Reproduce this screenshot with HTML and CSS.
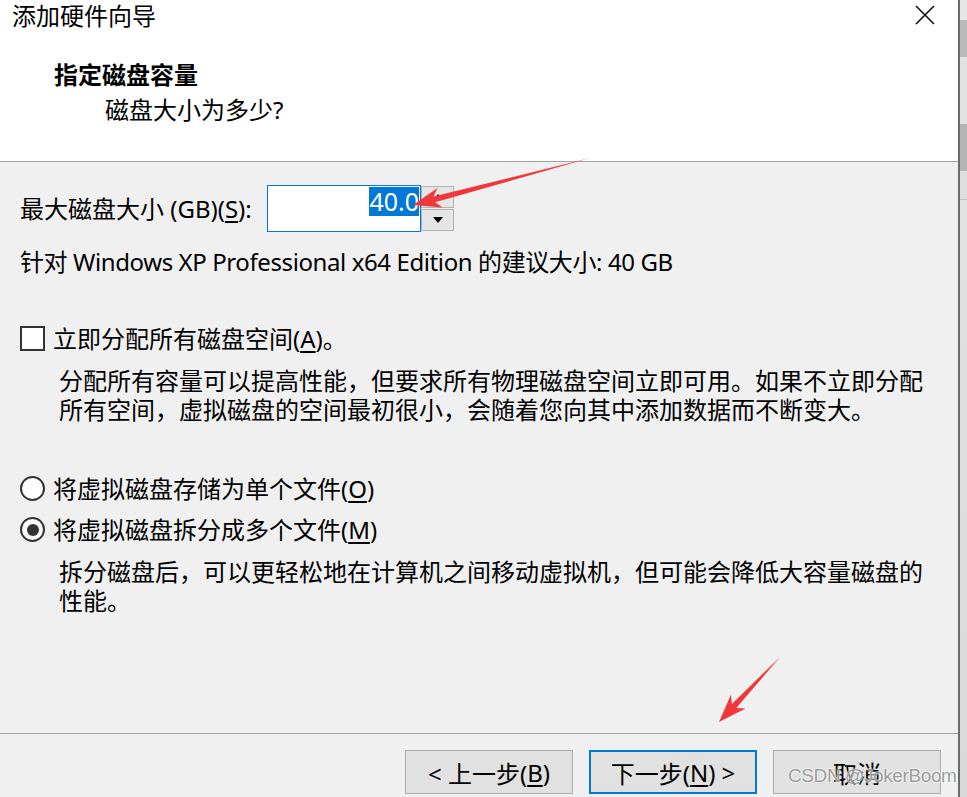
FILE: index.html
```html
<!DOCTYPE html>
<html lang="zh-CN">
<head>
<meta charset="UTF-8" />
<title>添加硬件向导</title>
<link rel="stylesheet" href="styles.css">
</head>
<body>

<div class="screen">
  <div class="dialog">
    <div class="header">
      <div class="titlebar">
        <span class="title">添加硬件向导</span>
        <svg class="close" width="20" height="20" viewBox="0 0 20 20">
          <path d="M1 1L19 19M19 1L1 19" stroke="#111" stroke-width="1.6" fill="none" />
        </svg>
      </div>
      <div class="heading">指定磁盘容量</div>
      <div class="subheading">磁盘大小为多少?</div>
    </div>

    <div class="content">
      <div class="size-row">
        <span class="size-label">最大磁盘大小 (GB)(<u>S</u>):</span>
        <div class="spin">
          <div class="spin-input"><span class="sel">40.0</span></div>
          <div class="spin-buttons">
            <div class="spin-btn"><span class="tri up"></span></div>
            <div class="spin-btn"><span class="tri down"></span></div>
          </div>
        </div>
      </div>

      <div class="hint">针对 Windows XP Professional x64 Edition 的建议大小: 40 GB</div>

      <div class="option check-row">
        <span class="checkbox"></span>
        <span>立即分配所有磁盘空间(<u>A</u>)。</span>
      </div>
      <p class="desc">分配所有容量可以提高性能，但要求所有物理磁盘空间立即可用。如果不立即分配所有空间，虚拟磁盘的空间最初很小，会随着您向其中添加数据而不断变大。</p>

      <div class="option radio-first">
        <span class="radio"></span>
        <span>将虚拟磁盘存储为单个文件(<u>O</u>)</span>
      </div>
      <div class="option radio-second">
        <span class="radio checked"></span>
        <span>将虚拟磁盘拆分成多个文件(<u>M</u>)</span>
      </div>
      <p class="desc">拆分磁盘后，可以更轻松地在计算机之间移动虚拟机，但可能会降低大容量磁盘的性能。</p>
    </div>

    <div class="footer">
      <div class="btn">&lt; 上一步(<u>B</u>)</div>
      <div class="btn default">下一步(<u>N</u>) &gt;</div>
      <div class="btn">取消</div>
    </div>

    <!-- red annotation arrows drawn over the screenshot -->
    <svg class="annot" width="958" height="797" viewBox="0 0 958 797">
      <polygon fill="#f0373a" points="590,158 433.5,196.5 437.5,188.1 413,205 442.7,207.5 435.1,202.3" />
      <polygon fill="#f0373a" points="780,657 731.9,703.9 730.9,694.8 719,722 745.5,708.4 736.3,708" />
    </svg>
    <div class="watermark">CSDN @JokerBoom</div>
  </div>
  <div class="edge"></div>
</div>

</body>
</html>
```

FILE: styles.css
```css
/* Reset */
* {
  margin: 0; padding: 0; box-sizing: border-box;
}
html, body {
  height: 100%;
  background: #f0f0f0;
  font-family: 'Noto Sans', 'Noto Sans CJK SC', sans-serif;
  font-size: 24px;
  color: #000;
  overflow: hidden;
}
u {
  text-decoration-thickness: 2px;
  text-underline-offset: 3px;
}
.screen {
  display: flex;
  height: 797px;
}
.dialog {
  position: relative;
  width: 958px;
  height: 797px;
  display: flex;
  flex-direction: column;
  background: #f0f0f0;
}
.edge {
  width: 9px;
  border-left: 2px solid #6b6b6b;
  background: linear-gradient(to bottom,
    #e6e6e6 0, #e6e6e6 20px,
    #b9b9b9 20px, #b9b9b9 57px,
    #e2e2e2 57px, #e2e2e2 124px,
    #b4b4b4 124px, #b4b4b4 171px,
    #dedede 171px, #dedede 199px,
    #bdbdbd 199px, #bdbdbd 200px,
    #e2e2e2 200px, #d9d9d9 100%);
}

/* Header */
.header {
  height: 162px;
  background: #fff;
  border-bottom: 1px solid #a0a0a0;
}
.titlebar {
  height: 32px;
  display: flex;
  justify-content: space-between;
  align-items: center;
  padding: 0 23px 0 12px;
}
.title {
  line-height: 32px;
}
.close {
  display: block;
  margin-top: -2px;
}
.heading {
  margin-top: 28px;
  padding-left: 54px;
  font-weight: bold;
  line-height: 30px;
}
.subheading {
  margin-top: 5px;
  padding-left: 105px;
  line-height: 30px;
}

/* Content */
.content {
  flex: 1;
  padding: 23px 0 0 20px;
  line-height: 29px;
}
.size-row {
  display: flex;
  align-items: center;
  gap: 9px;
  height: 47px;
}
.size-label {
  width: 238px;
  white-space: nowrap;
}
.spin {
  display: flex;
  height: 47px;
}
.spin-input {
  width: 154px;
  height: 47px;
  background: #fff;
  border: 1px solid #0078d7;
  text-align: right;
  padding: 1px 1px 0 0;
}
.sel {
  background: #0078d7;
  color: #fff;
  line-height: 29px;
  display: inline-block;
  font-size: 25px;
}
.spin-buttons {
  display: flex;
  flex-direction: column;
  gap: 1px;
  padding: 1px 0;
}
.spin-btn {
  width: 33px;
  flex: 1;
  background: #e5e5e5;
  border: 1px solid #b3b3b3;
  display: flex;
  justify-content: center;
  align-items: center;
}
.tri {
  width: 0; height: 0;
  border-left: 5px solid transparent;
  border-right: 5px solid transparent;
}
.tri.down { border-top: 6px solid #000; }
.tri.up { border-bottom: 6px solid #000; }

.hint {
  margin-top: 15px;
  letter-spacing: -0.4px;
}
.option {
  display: flex;
  align-items: center;
  gap: 8px;
  height: 29px;
}
.check-row { margin-top: 48px; }
.radio-first { margin-top: 50px; }
.radio-second { margin-top: 12px; }
.checkbox {
  width: 25px;
  height: 25px;
  border: 2px solid #333;
  background: #fff;
}
.radio {
  width: 25px;
  height: 25px;
  border: 2px solid #333;
  border-radius: 50%;
  background: #fff;
  display: flex;
  justify-content: center;
  align-items: center;
}
.radio.checked::after {
  content: '';
  width: 12px;
  height: 12px;
  border-radius: 50%;
  background: #333;
}
.desc {
  margin-top: 13px;
  padding-left: 39px;
  width: 912px;
}

/* Footer */
.footer {
  height: 64px;
  border-top: 1px solid #a0a0a0;
  display: flex;
  justify-content: flex-end;
  gap: 16px;
  padding: 16px 17px 0 0;
}
.btn {
  width: 168px;
  height: 44px;
  background: #e1e1e1;
  border: 1px solid #adadad;
  display: flex;
  justify-content: center;
  align-items: center;
}
.btn.default {
  border: 2px solid #0078d7;
}

/* overlays */
.annot {
  position: absolute;
  left: 0;
  top: 0;
  pointer-events: none;
}
.watermark {
  position: absolute;
  left: 788px;
  top: 765px;
  white-space: nowrap;
  font-family: 'Liberation Sans', sans-serif;
  font-size: 19px;
  letter-spacing: -0.4px;
  color: rgba(130, 130, 130, 0.8);
  text-shadow: 0 0 2px #fff, 0 0 2px #fff;
}
```
